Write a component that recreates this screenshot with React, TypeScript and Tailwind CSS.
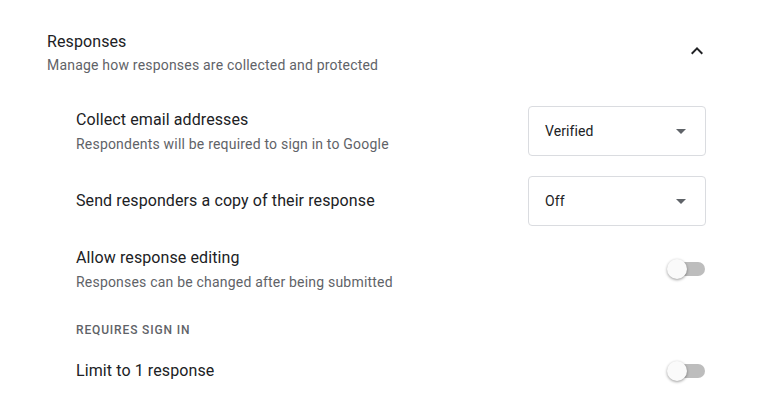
import { useState } from "react";

type SelectProps = { value: string };

function FakeSelect({ value }: SelectProps) {
  return (
    <button
      type="button"
      className="flex h-[50px] w-[178px] shrink-0 items-center justify-between rounded border border-[#dadce0] bg-white pl-4 pr-3 text-left text-sm tracking-[0.1px] text-[#202124]"
    >
      <span>{value}</span>
      <svg width="24" height="24" viewBox="0 0 24 24" className="fill-[#5f6368]">
        <path d="M7 10l5 5 5-5z" />
      </svg>
    </button>
  );
}

function Toggle({ on, onChange }: { on: boolean; onChange: () => void }) {
  return (
    <button type="button" onClick={onChange} className="relative mr-px h-5 w-[38px] shrink-0">
      <span
        className={`absolute right-0 top-[3px] h-[14px] w-9 rounded-full ${on ? "bg-[#c6dafc]" : "bg-[#bdbdbd]"}`}
      />
      <span
        className={`absolute top-0 h-5 w-5 rounded-full shadow-[0_1px_3px_rgba(0,0,0,0.4)] ${
          on ? "right-0 bg-[#1a73e8]" : "left-0 bg-[#fafafa]"
        }`}
      />
    </button>
  );
}

function RowText({ title, sub }: { title: string; sub?: string }) {
  return (
    <div>
      <div className="text-base leading-6 tracking-[0.1px] text-[#202124]">{title}</div>
      {sub && <div className="mt-[2px] text-sm leading-5 tracking-[0.2px] text-[#5f6368]">{sub}</div>}
    </div>
  );
}

export default function App() {
  const [editing, setEditing] = useState(false);
  const [limit, setLimit] = useState(false);

  return (
    <div className="min-h-[409px] bg-white pl-[47px] pr-[52px] pt-[30px] font-['Roboto',sans-serif]">
      <div className="flex items-start justify-between">
        <div>
          <div className="text-base leading-6 tracking-[0.1px] text-[#202124]">Responses</div>
          <div className="mt-px text-sm leading-5 tracking-[0.2px] text-[#5f6368]">
            Manage how responses are collected and protected
          </div>
        </div>
        <svg width="24" height="24" viewBox="0 0 24 24" className="-mr-[3px] mt-[9px] fill-[#202124]">
          <path d="M12 8l-6 6 1.41 1.41L12 10.83l4.59 4.58L18 14z" />
        </svg>
      </div>

      <div className="mt-[31px] pl-[29px]">
        <div className="flex items-center justify-between">
          <RowText title="Collect email addresses" sub="Respondents will be required to sign in to Google" />
          <FakeSelect value="Verified" />
        </div>

        <div className="mt-5 flex items-center justify-between">
          <RowText title="Send responders a copy of their response" />
          <FakeSelect value="Off" />
        </div>

        <div className="mt-[20px] flex items-center justify-between">
          <RowText title="Allow response editing" sub="Responses can be changed after being submitted" />
          <Toggle on={editing} onChange={() => setEditing(!editing)} />
        </div>

        <div className="mt-[30px] text-xs font-medium uppercase leading-4 tracking-[0.85px] text-[#5f6368]">
          Requires sign in
        </div>

        <div className="mt-[21px] flex items-center justify-between">
          <RowText title="Limit to 1 response" />
          <Toggle on={limit} onChange={() => setLimit(!limit)} />
        </div>
      </div>
    </div>
  );
}
